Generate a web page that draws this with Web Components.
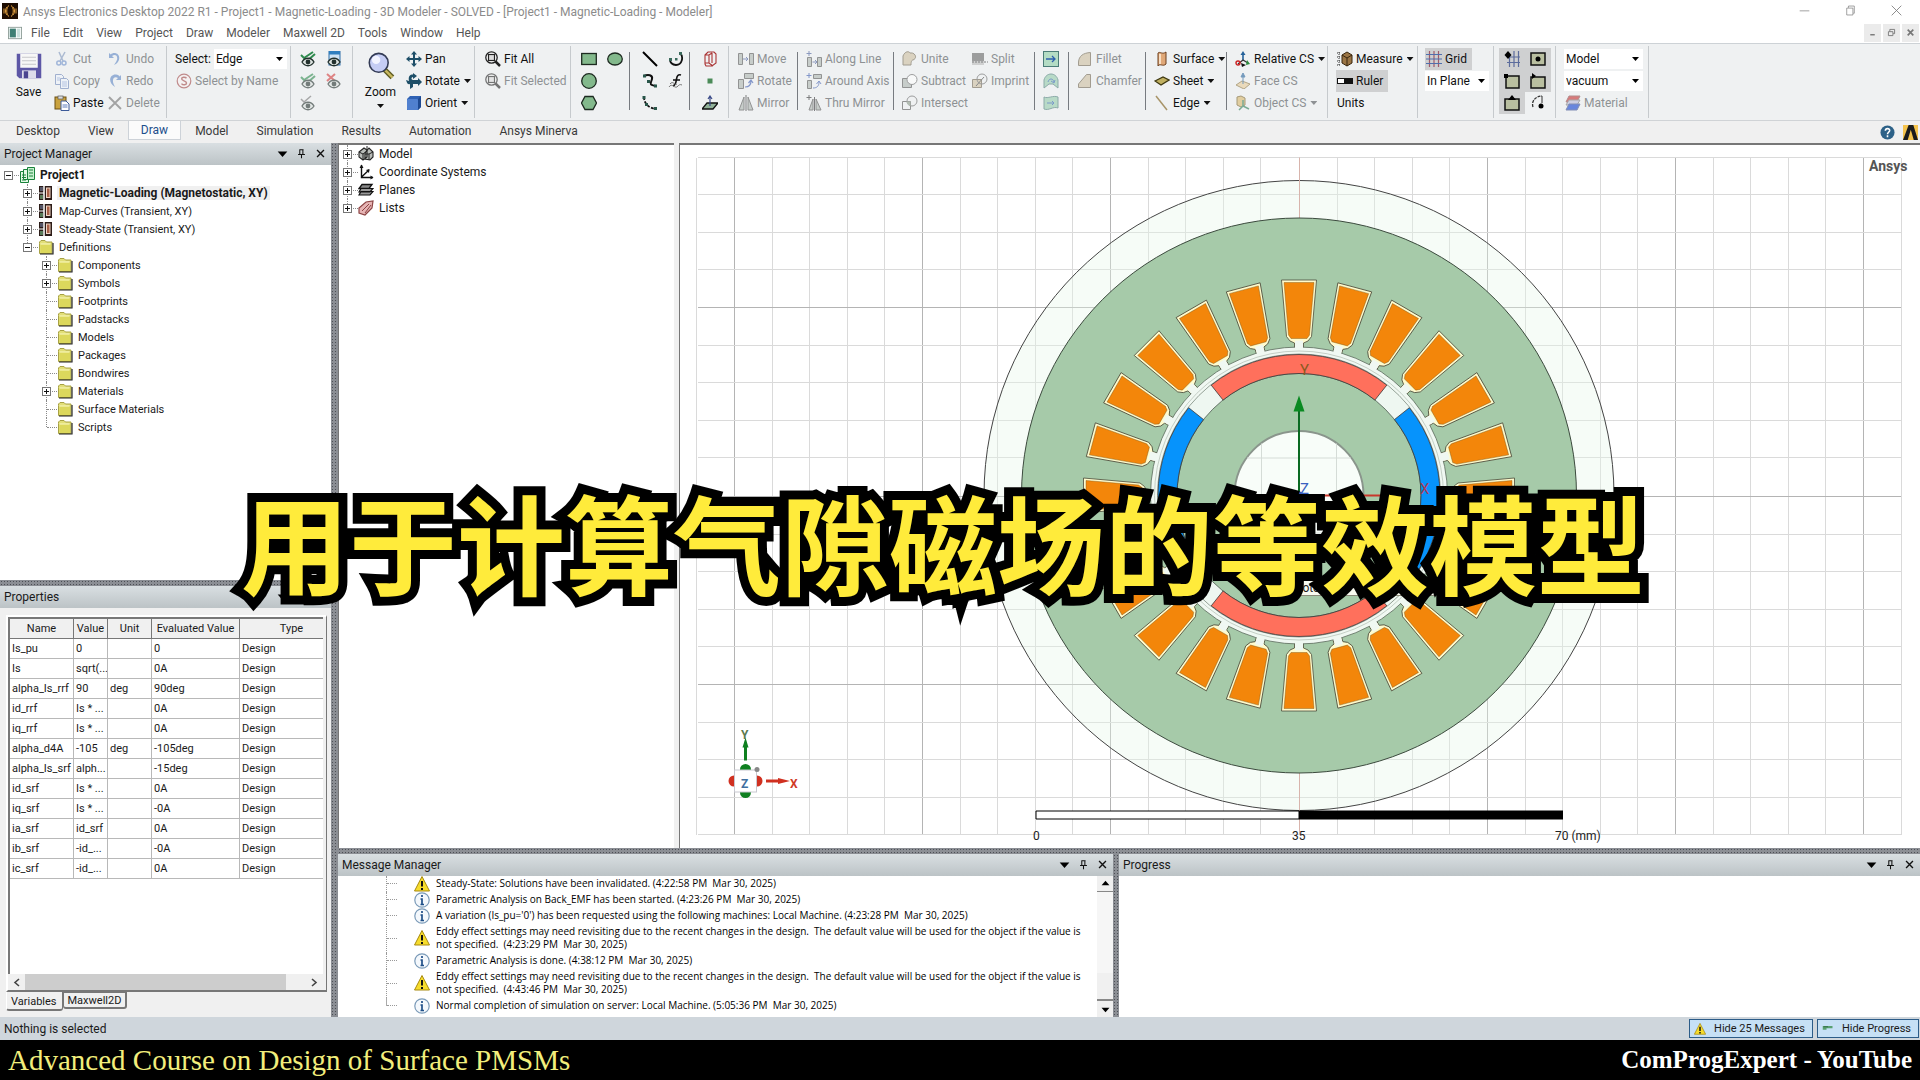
<!DOCTYPE html>
<html lang="en">
<head>
<meta charset="utf-8">
<title>Ansys Electronics Desktop 2022 R1</title>
<style>
	html, body {
		margin: 0;
		height: 100%;
		overflow: hidden;
		background: #f0f0f0;
		font-family: Roboto, "Open Sans", sans-serif;
		font-size: 12px;
		color: #1a1a1a;
	}
</style>
</head>
<body>
<desktop-app></desktop-app>

<script>
const EYE = '<path d="M2 11c3-5 9-5 12 0-3 5-9 5-12 0z" fill="#dfe5e2" stroke="#22302c" stroke-width="1.3"/><circle cx="8" cy="11" r="2.4" fill="#22302c"/>'
const SLAB = 'fill="#aeb6b0" stroke="#555" stroke-width="1"'
const TAN = 'fill="#cdbf9f" stroke="#6f6550" stroke-width="1"'

const ICONS = {
	app: '<rect width="16" height="16" fill="#1d0d02"/><g fill="none" stroke="#e0a040" stroke-width="1"><path d="M7 2.500C4 4 4 12 7 13.500M5 4c-2 2-2 6 0 8M9 2.500c3 1.500 3 9.500 0 11M11 4c2 2 2 6 0 8M2 5.500v5M14 5.500v5"/></g>',
	doc: '<rect x=".5" y="1.500" width="15" height="13" fill="#fff" stroke="#8a9a94"/><rect x="2" y="3" width="7" height="10" fill="#3f7f74"/><rect x="10" y="3" width="4" height="10" fill="#c9e0dc"/>',
	save: '<path d="M1 1h14v14H2.500L1 13.500z" fill="#5d57a6"/><rect x="3" y="1" width="10" height="8" fill="#f7f7f7"/><path d="M4 3h8M4 5h8M4 7h8" stroke="#c8c8cc" stroke-width=".6"/><rect x="4" y="10.500" width="8" height="4.500" fill="#dcdcea"/><rect x="5" y="11" width="2.500" height="4" fill="#4a4490"/>',
	cut: '<path d="M5 1l4 9M11 1L6 10" stroke="#7f96bd" stroke-width="1.500" fill="none"/><circle cx="4.800" cy="12" r="2" fill="none" stroke="#6d8fc9" stroke-width="1.500"/><circle cx="10" cy="12" r="2" fill="none" stroke="#6d8fc9" stroke-width="1.500"/>',
	copy: '<path d="M1.500 1.500h6l2 2v8h-8z" fill="#eef3fb" stroke="#6d86b8"/><path d="M6.500 5.500h6l2 2v8h-8z" fill="#eef3fb" stroke="#6d86b8"/><path d="M8 9h5M8 11h5M8 13h5M3 5h3M3 7h3" stroke="#8fa8d8"/>',
	paste: '<rect x="1" y="2" width="11" height="12" fill="#c9a23e" stroke="#6b4f12"/><rect x="4" y="1" width="5" height="3" fill="#ddd" stroke="#555" stroke-width=".7"/><path d="M7 6h5l3 3v6.500H7z" fill="#fff" stroke="#3c5a99"/><path d="M8.500 10h5M8.500 12h5" stroke="#5c7dbd"/>',
	undo: '<path d="M2 2v5h5L5 5c4-3 7 1 4 6l-2 3c7-3 7-12 0-12C6 2 4.500 2.500 3.800 3.500z" fill="#5d86c4"/>',
	redo: '<path d="M14 2v5H9l2-2C8 3 4 5 7 12l1 2C0 9 3 1 9 1.500c2 0 3 1 3.600 2z" fill="#5d86c4"/>',
	del: '<path d="M2 2l12 12M14 2L2 14" stroke="#6f6f6f" stroke-width="1.800"/>',
	byname: '<circle cx="8" cy="8" r="6.800" fill="#f8f2f2" stroke="#a24848" stroke-width="1.200"/><path d="M10.500 5.200C9 3.500 5.500 4 5.700 6c.3 2.200 4.800 1.500 4.800 4 0 2.200-3.500 2.500-5 .6" fill="none" stroke="#a24848" stroke-width="1.500"/>',
	eyecheck: '<path d="M1 4l3 3 9-6M4 8l3 2 8-7" stroke="#2f8b4e" stroke-width="2" fill="none"/>' + EYE,
	eyewin: '<rect x="3" y="0" width="11" height="14" fill="#cfe4f5" stroke="#2f6ea8"/><rect x="3" y="0" width="11" height="3.500" fill="#2f7fc0"/>' + EYE,
	eyex: '<path d="M1 1l8 7M9 1L1 8" stroke="#d43c3c" stroke-width="2"/>' + EYE,
	eyeplain: '<path d="M1 4l3 3 7-6" stroke="#777" stroke-width="1.500" fill="none"/>' + EYE,
	zoom: '<path d="M10 10l4.500 4.500" stroke="#5d5a20" stroke-width="3"/><path d="M10.500 10.500l4 4" stroke="#c8b860" stroke-width="1.400"/><circle cx="6.700" cy="6.200" r="5.400" fill="#c5cdf4" stroke="#333b55" stroke-width=".9"/><circle cx="5.200" cy="4.500" r="2.400" fill="#f2f4ff"/>',
	pan: '<path d="M8 0l3 3.500H9V7h3.500V5L16 8l-3.500 3V9H9v3.500h2L8 16l-3-3.500h2V9H3.500v2L0 8l3.500-3v2H7V3.500H5z" fill="#1e4f68"/>',
	rotate: '<path d="M7 0l4 3-4 3V4C5 4 5 7 7 7h5V5l4 4-4 4v-2H7v3l-3 2v-5C1 12 1 9 0 7l3 1C2 3 4 1.500 7 1.500z" fill="#1e4f68"/>',
	orient: '<path d="M1 4l3-3h11v11l-3 3H1z" fill="#2f62b4"/><rect x="1" y="4" width="11" height="11" rx="1" fill="#5080cf"/><path d="M12 4l3-3v11l-3 3z" fill="#1e4a92"/>',
	fitall: '<path d="M10 10l5 5" stroke="#222" stroke-width="2.500"/><circle cx="6.500" cy="6.500" r="5.700" fill="#fff" stroke="#222" stroke-width="1.300"/><rect x="3.500" y="3.500" width="6" height="6" fill="#ddd" stroke="#222" stroke-width="1.200"/>',
	rect: '<rect x=".7" y="2.500" width="14.600" height="11" fill="#83b98c" stroke="#1d2a20" stroke-width="1.300"/>',
	ellipse: '<ellipse cx="8" cy="8" rx="7.300" ry="6" fill="#83b98c" stroke="#1d2a20" stroke-width="1.300"/>',
	circle: '<circle cx="8" cy="8" r="7.300" fill="#83b98c" stroke="#1d2a20" stroke-width="1.300"/>',
	hexagon: '<path d="M4 1.500h8l3.500 6.500-3.500 6.500H4L.5 8z" fill="#83b98c" stroke="#1d2a20" stroke-width="1.300"/>',
	line: '<path d="M1 1l14 14" stroke="#000" stroke-width="2"/>',
	arc: '<path d="M12 2c4 4 2 12-4 12-4 0-6-3-6-5" fill="none" stroke="#111" stroke-width="1.800"/><path d="M11 1h3v3h-3zM1 7h3v3H1zM7 7h2.500v2.500H7z" fill="#3b6a5c"/>',
	spline: '<path d="M2 3c4-2 9-1 8 3S6 12 14 13" fill="none" stroke="#111" stroke-width="2"/><path d="M1 1.500h3v3H1zM12 11.500h3v3h-3zM5 7h3v3H5z" fill="#29564a"/>',
	func: '<path d="M13 2c-3-1-4 1-4.500 4S8 12 5 13M5 7h7" fill="none" stroke="#111" stroke-width="1.600"/><path d="M1 14c3-5 6 3 9-1 1-1 2-2 4-1M2 11c3-4 5 2 7 0" fill="none" stroke="#777"/>',
	arc3: '<path d="M2 2c0 6 4 11 12 12" fill="none" stroke="#111" stroke-width="1.800" stroke-dasharray="3 1.500"/><path d="M.5 1h3v3h-3zM3 8h3v3H3zM12 12h3v3h-3z" fill="#29564a"/>',
	box3d: '<path d="M3 4l3-3h6l2 2v9l-4 3H4l-1-2zM3 4h4l3-2M7 4v8M10 2v10M3 12l4 0 4 3" fill="none" stroke="#a33" stroke-width="1.100"/>',
	point: '<rect x="5.500" y="5.500" width="5" height="5" fill="#4b8b58"/>',
	plane: '<path d="M0 14l5-6h11l-5 6z" fill="#8fb097" stroke="#111" stroke-width="1.300"/><path d="M8 11V1M6 4l2-3 2 3" stroke="#3a4a88" stroke-width="1.200" fill="none"/>',
	move: `<path d="M.5 2.500h4v11h-4zM11.500 2.500h4v11h-4z" ${SLAB}/><path d="M5 8h5M8 6l2 2-2 2" stroke="#4a5f9c" fill="none"/>`,
	turn: `<path d="M.5 6.500h5v9h-5zM6.500.5h9v5h-9z" ${SLAB}/><path d="M7 14c4 0 6-2 6-6M10.500 10L13 7l2 3" stroke="#3d5cb0" stroke-width="1.200" fill="none"/>`,
	mirror: `<path d="M6 2v13H1zM10 2v13h5z" ${SLAB}/><path d="M8 0v16" stroke="#333"/>`,
	dupline: `<path d="M1.500 6.500h4v9h-4zM11.500 6.500h4v9h-4z" ${SLAB}/><path d="M6.500 11h4M9 9l2 2-2 2M3 0v5M.5 2.500h5" stroke="#4a5f9c" fill="none"/>`,
	dupaxis: `<path d="M1.500 7.500h4v8h-4zM7.500 1.500h8v4h-8z" ${SLAB}/><path d="M7 15c4 0 6-2 6-6M10.500 11L13 8l2 3M3 0v5M.5 2.500h5" stroke="#3d5cb0" fill="none"/>`,
	dupmirror: `<path d="M7 4v11H3zM10 4v11h5z" ${SLAB}/><path d="M8.500 2v14M3 0v5M.5 2.500h5" stroke="#333"/>`,
	unite: `<path d="M1 5c2-5 6-5 7-3 5-1 8 5 3 7-1 0-2 1-2 5H1z" ${TAN}/>`,
	subtract: `<path d="M.5 5.500h9v9h-9z" ${SLAB}/><circle cx="10" cy="6.500" r="5" fill="#fff" stroke="#666"/>`,
	intersect: `<circle cx="10" cy="6" r="5" fill="none" stroke="#666"/><path d="M.5 6.500h8v8h-8z" fill="none" stroke="#555"/><path d="M4 6.500h4.500V11C6 10.500 5 9 4.500 6.500z" fill="#8a9a88"/>`,
	split: '<path d="M0 2h12v8H0z" fill="#666"/><path d="M0 10h12v4H0z" fill="#bbb"/><path d="M0 11h16" stroke="#333" stroke-dasharray="2 1"/>',
	imprint: `<path d="M.5 6.500h9v8h-9z" ${TAN}/><circle cx="10" cy="6" r="5" fill="none" stroke="#666"/><path d="M4 13l8-9" stroke="#444"/>`,
	sheetarrow: '<rect x=".5" y=".5" width="15" height="15" fill="#b4dcc4" stroke="#4c7c78"/><path d="M3 8h9M9 5l3 3-3 3" stroke="#2e5fae" fill="none" stroke-width="1.300"/>',
	sheetbend: '<path d="M1 15V7c2-8 12-8 14 0v8l-5-4H6z" fill="#94ccac" stroke="#4c7c78"/><path d="M5 9c1-4 5-4 6 0M8 8l3 2 1-3" stroke="#2e5fae" fill="none"/>',
	sheetwrap: '<path d="M1 2c4 2 9-2 14 0v11c-5-2-9 3-14 1z" fill="#94ccac" stroke="#4c7c78"/><path d="M4 8h7M9 6l2 2-2 2" stroke="#2e5fae" fill="none"/>',
	fillet: `<path d="M1.500 14.500V11C2 5 6 2 13.500 1.500v13z" ${TAN}/>`,
	chamfer: `<path d="M1.500 14.500V11l8-9.500h4v13z" ${TAN}/>`,
	surface: '<path d="M4 2c2-2 4 2 8-1v12c-3 3-6-1-8 2z" fill="#e0a878" stroke="#6b3e1e"/><path d="M6 3v10" stroke="#fff0dc" stroke-width="1.500"/>',
	sheet: '<path d="M1 8l8-4 6 3-8 5z" fill="#c0b060" stroke="#3e3810" stroke-width="1.300"/>',
	edge: '<path d="M2 1l11 14" stroke="#a89468" stroke-width="1.500"/>',
	relcs: '<path d="M8 9V2" stroke="#24629a" stroke-width="1.600"/><path d="M5.500 4L8 0l2.500 4z" fill="#24629a"/><path d="M8 9l-5 4M8 9l5 3" stroke="#333" stroke-width="1.400"/><circle cx="3" cy="12" r="2" fill="none" stroke="#c22" stroke-width="1.400"/><path d="M12 9l3 4-4 1z" fill="#2c8a3c"/><path d="M6 12l5 2-4 2z" fill="#111"/>',
	facecs: '<path d="M1 12l6-4 8 3-6 5z" fill="#e8cc98" stroke="#8a7440"/><path d="M8 11V2M6 4l2-4 2 4z" stroke="#24629a" fill="#24629a"/>',
	objectcs: '<path d="M2 2l4-1 4 2v7l-4 2-4-2z" fill="#d8b86a" stroke="#77602a"/><path d="M8 5v6l6 3M8 11l-4 4" stroke="#2f7f58" stroke-width="1.500" fill="none"/>',
	measure: '<path d="M5 4l5-3 5 3v8l-5 3-5-3z" fill="#9a7444" stroke="#38260e"/><path d="M5 4l5 3 5-3M10 7v8" stroke="#38260e" fill="none"/><path d="M2 1v14M0 2h3M0 6h3M0 10h3M0 14h3" stroke="#333" stroke-dasharray="1 1"/>',
	ruler: '<rect x=".5" y="5.500" width="15" height="5" fill="#fff" stroke="#111"/><rect x="7" y="6" width="8" height="4" fill="#111"/>',
	grid: '<path d="M3.500 0v16M8 0v16M12.500 0v16" stroke="#a05a6a" stroke-width="1.200"/><path d="M0 3.500h16M0 8h16M0 12.500h16" stroke="#4f6fae" stroke-width="1.200"/>',
	snapgrid: '<path d="M5.500 4v12M10 0v16M14.500 0v16M3 6h13M3 11.500h13" stroke="#5c6c9c" stroke-width="1.200"/><path d="M4 0l3.500 4L4 8 .5 4z" fill="#000"/>',
	snapcenter: '<rect x="1" y="2" width="14" height="12" fill="#b9bfa0" stroke="#111" stroke-width="1.500"/><circle cx="8" cy="8" r="2.500" fill="#000"/>',
	snapvertex: '<rect x="2" y="3" width="13" height="12" fill="#b9bfa0" stroke="#111" stroke-width="1.500"/><rect x="0" y="1" width="4" height="4" fill="#000"/>',
	snapmid: '<rect x="1" y="4" width="14" height="11" fill="#b9bfa0" stroke="#111" stroke-width="1.500"/><path d="M2 0l4 3-4 3z" fill="#000"/>',
	snapface: '<rect x="1" y="4" width="14" height="11" fill="#b9bfa0" stroke="#111" stroke-width="1.500"/><path d="M8 0l4 5H4z" fill="#000"/>',
	snaparc: '<path d="M3 12C1 6 6 1 12 1" fill="none" stroke="#333" stroke-width="1.300" stroke-dasharray="3 1"/><path d="M12 1v7" stroke="#333"/><circle cx="11" cy="11" r="2.500" fill="#000"/>',
	material: '<path d="M4 1h11l-3 6H1z" fill="#c82c2c" stroke="#8a4a4a"/><path d="M4 5h11l-3 5H1z" fill="#b8b8d8" stroke="#777"/><path d="M4 9h11l-3 6H1z" fill="#1040d0" stroke="#3a4c8c"/>',
	help: '<circle cx="8" cy="8" r="7.500" fill="#2d6187"/><path d="M5.700 6.200C5.800 3 10.500 3.200 10.300 6 10 7.800 8 7.800 8 9.800M8 11v2" fill="none" stroke="#fff" stroke-width="1.700"/>',
	logo: '<rect width="16" height="16" fill="#f5c34c"/><path d="M6 0h5l5 16h-4.500L8.300 5 5 16H0z" fill="#1b1b1b"/>',
	project: '<path d="M1.500 4.500h8v11h-8z" fill="#e2f8e4" stroke="#18823a"/><path d="M4.500 2.500h7v10h-7z" fill="#e2f8e4" stroke="#18823a"/><path d="M8.500.5h7v12h-7z" fill="#c7f0cf" stroke="#18823a"/><path d="M3 8h4M3 10.500h4M3 13h4M10 3h4M10 6h4M10 9h4" stroke="#18823a"/>',
	design: '<rect x="1" y="1" width="13" height="14" fill="#2c1c18"/><path d="M6 0v16" stroke="#fff" stroke-width="1.500"/><rect x="8.500" y="3" width="3.500" height="9.500" fill="#a86048" stroke="#f1d8c8"/><rect x="2" y="2" width="3" height="4" fill="#556"/><rect x="2" y="10" width="3" height="4" fill="#587a58"/><path d="M1 8h5" stroke="#fff"/>',
	folder: '<path d="M1.500 4.500V3L3 1.500h4L8.500 3H14v11.500H1.500z" fill="#e2df78" stroke="#a8a244"/><path d="M2.500 5H13v9H2.500z" fill="#dcd85c"/><path d="M2 15h13V4" fill="none" stroke="#222" stroke-width="1.200"/><path d="M2.500 5h10" stroke="#fbf9c4"/>',
	model: '<path d="M1 6l5-4 3 2v7l-4 3-4-3zM7 7l4-5 4 4v5l-3 3-5-1z" fill="#b9bcb9" stroke="#222" stroke-width="1.100"/><path d="M1 6l4 2 4-3M5 8v6M7 8l4 0 4-2M11 8v6M9 5V0" stroke="#222" fill="none"/>',
	axes: '<path d="M3.500 1v12.500H15M3.500 13L11 6" fill="none" stroke="#111" stroke-width="1.400"/><path d="M1.500 4l2-3.500 2 3.500zM12.500 11.500l3 2-3 2zM8 6l3.500-1L11 9z" fill="#111"/>',
	planes: '<path d="M4 2.500h10l-3 4H1z" fill="#888" stroke="#111" stroke-width="1.300"/><path d="M3 6.500h12l-3 3.500H1zM3 9.500h12l-3 3.500H1z" fill="#999" stroke="#111" stroke-width="1.200"/>',
	lists: '<path d="M1 8l7-6 7-1-1 7-7 7-6-2z" fill="#e6b4b4" stroke="#8c4444" stroke-width="1.200"/><path d="M4 11l7-7M7 13l6-8" stroke="#8c4444"/>',
	warn: '<path d="M8 .5l7.500 14.500H.5z" fill="#f6dc2c" stroke="#a88a10"/><path d="M8 5v5.500M8 12v2" stroke="#111" stroke-width="2"/>',
	info: '<circle cx="8" cy="8" r="7.200" fill="#f4f8fc" stroke="#7a9ab8" stroke-width="1.200"/><path d="M8 3v2M6.500 7H8v5M6.500 12.500h3.500" stroke="#1f4f88" stroke-width="1.700" fill="none"/>',
	progress: '<path d="M1 4h13v3H6v2H1z" fill="#58a070"/><path d="M2 5h6" stroke="#2b5c3c"/>',
	pin: '<path d="M5 2.500h6M5.500 2v7M10 2v7M3 9.500h10M8 10v5" stroke="#111" stroke-width="1.500" fill="none"/>',
	close: '<path d="M3 3l10 10M13 3L3 13" stroke="#111" stroke-width="2"/>',
	down: '<path d="M1 5h14l-7 8z" fill="#000"/>',
	minimize: '<path d="M1 8.500h14" stroke="#777"/>',
	restore: '<path d="M2.500 4.500h9v10h-9zM5 4V1.500h8.500V12H12" stroke="#777" fill="none"/>',
	quit: '<path d="M1 1l14 14M15 1L1 15" stroke="#777" stroke-width="1.200"/>',
	mdimin: '<path d="M4 12h8" stroke="#777" stroke-width="2.500"/>',
	mdirestore: '<path d="M2.500 6.500h8v7h-8zM5 6V2.500h8.500V10H11" stroke="#777" stroke-width="1.600" fill="none"/>',
	mdiclose: '<path d="M3 3l10 10M13 3L3 13" stroke="#777" stroke-width="3"/>'
}

class BaseElement extends HTMLElement {
	connectedCallback(){
		if (!this.shadowRoot) {
			this.attachShadow({ mode: 'open' })
		}
		this.shadowRoot.innerHTML = this.render()
	}
	attr(name, fallback = ''){
		return this.getAttribute(name) || fallback
	}
}

class SvgIcon extends BaseElement {
	render(){
		return `
			<style>
				:host { display: inline-block; flex: none; width: var(--size, 16px); height: var(--size, 16px); }
				svg { display: block; width: 100%; height: 100%; }
			</style>
			<svg viewBox="0 0 16 16" aria-hidden="true">${ICONS[this.attr('name')] || ''}</svg>
		`
	}
}
customElements.define('svg-icon', SvgIcon)

class TitleBar extends BaseElement {
	render(){
		return `
			<style>
				:host { display: flex; align-items: center; height: 22px; background: #fff; color: #8b8b8b; padding: 0 1px 0 2px; }
				span { flex: 1; padding: 2px 0 0 5px; }
				button { border: 0; background: none; width: 46px; height: 20px; padding: 0; --size: 11px; }
			</style>
			<svg-icon name="app"></svg-icon>
			<span>Ansys Electronics Desktop 2022 R1 - Project1 - Magnetic-Loading - 3D Modeler - SOLVED - [Project1 - Magnetic-Loading - Modeler]</span>
			<button aria-label="Minimize"><svg-icon name="minimize"></svg-icon></button>
			<button aria-label="Restore"><svg-icon name="restore"></svg-icon></button>
			<button aria-label="Close"><svg-icon name="quit"></svg-icon></button>
		`
	}
}
customElements.define('title-bar', TitleBar)

class MenuBar extends BaseElement {
	render(){
		const items = ['File', 'Edit', 'View', 'Project', 'Draw', 'Modeler', 'Maxwell 2D', 'Tools', 'Window', 'Help']
		return `
			<style>
				:host { display: flex; align-items: center; height: 21px; background: #fff; padding: 0 1px 0 8px; --size: 14px; }
				nav { display: flex; flex: 1; gap: 13px; padding-left: 9px; }
				nav button { border: 0; background: none; padding: 0; font: inherit; color: #555; }
				.mdi { display: flex; gap: 2px; --size: 9px; }
				.mdi button { width: 17px; height: 18px; padding: 0; border: 0; background: #ebebeb; }
			</style>
			<svg-icon name="doc"></svg-icon>
			<nav>${items.map(i => `<button>${i}</button>`).join('')}</nav>
			<div class="mdi">
				<button aria-label="Minimize window"><svg-icon name="mdimin"></svg-icon></button>
				<button aria-label="Restore window"><svg-icon name="mdirestore"></svg-icon></button>
				<button aria-label="Close window"><svg-icon name="mdiclose"></svg-icon></button>
			</div>
		`
	}
}
customElements.define('menu-bar', MenuBar)

class RibbonGroup extends BaseElement {
	render(){
		return `
			<style>
				:host {
					display: grid;
					box-sizing: border-box;
					grid-template-rows: repeat(3, 22px);
					grid-template-columns: ${this.attr('cols')};
					grid-auto-flow: column;
					align-items: center;
					padding: 4px 0 8px ${this.attr('pad', '0')}px;
					background: linear-gradient(90deg, #c6cacd, #c6cacd) right 2px / 1px 72px no-repeat;
				}
			</style>
			<slot></slot>
		`
	}
}
customElements.define('ribbon-group', RibbonGroup)

class RibbonSep extends BaseElement {
	render(){
		return `<style>:host { display: block; grid-row: span 3; height: 58px; border-left: 1px solid #777b80; }</style>`
	}
}
customElements.define('ribbon-sep', RibbonSep)

class RibbonButton extends BaseElement {
	render(){
		const disabled = this.hasAttribute('disabled')
		const icon = this.attr('icon')
		return `
			<style>
				:host { display: block; }
				:host([large]) { grid-row: span 3; align-self: start; }
				button {
					display: flex;
					align-items: center;
					gap: 3px;
					height: 22px;
					padding: 0 5px 0 1px;
					border: 0;
					background: none;
					font: inherit;
					color: #111;
					white-space: nowrap;
				}
				:host([iconly]) button { padding: 0 5px; }
				:host([pressed]) button { background: #cfd0d1; }
				:host([disabled]) button { color: #8e9194; }
				:host([disabled]) svg-icon { opacity: .6; }
				:host([large]) button { flex-direction: column; width: 100%; height: 66px; padding: 4px 0 0; gap: 5px; --size: 28px; }
				.caret { width: 7px; height: 4px; margin-left: 1px; background: currentColor; clip-path: polygon(0 0, 100% 0, 50% 100%); }
				:host([large]) .caret { margin: 0; }
			</style>
			<button ${disabled ? 'disabled' : ''} ${this.hasAttribute('iconly') ? `aria-label="${icon}"` : ''}>
				${icon ? `<svg-icon name="${icon}"></svg-icon>` : ''}
				<slot></slot>
				${this.hasAttribute('caret') ? '<i class="caret"></i>' : ''}
			</button>
		`
	}
}
customElements.define('ribbon-button', RibbonButton)

class ComboBox extends BaseElement {
	render(){
		return `
			<style>
				:host { display: flex; align-items: center; gap: 3px; color: #111; }
				.box { position: relative; flex: 1; }
				select { appearance: none; display: block; width: 100%; height: 20px; border: 0; border-radius: 0; padding: 0 2px; background: #fff; font: inherit; color: inherit; }
				i { position: absolute; right: 4px; top: 8px; width: 7px; height: 4px; background: #000; clip-path: polygon(0 0, 100% 0, 50% 100%); pointer-events: none; }
			</style>
			${this.attr('label') ? `<label for="s">${this.attr('label')}</label>` : ''}
			<div class="box"><select id="s" aria-label="${this.attr('name', this.attr('label'))}"><option>${this.attr('value')}</option></select><i></i></div>
		`
	}
}
customElements.define('combo-box', ComboBox)

class RibbonBar extends BaseElement {
	render(){
		return `
			<style>
				:host { display: flex; box-sizing: border-box; height: 78px; background: #eff1f2; border-top: 1px solid #cdd2d6; border-bottom: 1px solid #d0d3d6; }
				combo-box.select { width: 112px; }
			</style>
			<ribbon-group cols="49px 53px 61px" pad="4">
				<ribbon-button large icon="save">Save</ribbon-button>
				<ribbon-button disabled icon="cut">Cut</ribbon-button>
				<ribbon-button disabled icon="copy">Copy</ribbon-button>
				<ribbon-button icon="paste">Paste</ribbon-button>
				<ribbon-button disabled icon="undo">Undo</ribbon-button>
				<ribbon-button disabled icon="redo">Redo</ribbon-button>
				<ribbon-button disabled icon="del">Delete</ribbon-button>
			</ribbon-group>
			<ribbon-group cols="116px" pad="8">
				<combo-box class="select" label="Select:" value="Edge"></combo-box>
				<ribbon-button disabled icon="byname">Select by Name</ribbon-button>
			</ribbon-group>
			<ribbon-group cols="26px 32px" pad="4">
				<ribbon-button iconly icon="eyecheck"></ribbon-button>
				<ribbon-button iconly disabled icon="eyecheck"></ribbon-button>
				<ribbon-button iconly disabled icon="eyeplain"></ribbon-button>
				<ribbon-button iconly icon="eyewin"></ribbon-button>
				<ribbon-button iconly disabled icon="eyex"></ribbon-button>
			</ribbon-group>
			<ribbon-group cols="49px 70px" pad="3">
				<ribbon-button large caret icon="zoom">Zoom</ribbon-button>
				<ribbon-button icon="pan">Pan</ribbon-button>
				<ribbon-button caret icon="rotate">Rotate</ribbon-button>
				<ribbon-button caret icon="orient">Orient</ribbon-button>
			</ribbon-group>
			<ribbon-group cols="87px" pad="9">
				<ribbon-button icon="fitall">Fit All</ribbon-button>
				<ribbon-button disabled icon="fitall">Fit Selected</ribbon-button>
			</ribbon-group>
			<ribbon-group cols="26px 27px 8px 26px 26px 8px 32px" pad="5">
				<ribbon-button iconly icon="rect"></ribbon-button>
				<ribbon-button iconly icon="circle"></ribbon-button>
				<ribbon-button iconly icon="hexagon"></ribbon-button>
				<ribbon-button iconly icon="ellipse"></ribbon-button>
				<ribbon-sep></ribbon-sep>
				<ribbon-button iconly icon="line"></ribbon-button>
				<ribbon-button iconly icon="spline"></ribbon-button>
				<ribbon-button iconly icon="arc3"></ribbon-button>
				<ribbon-button iconly icon="arc"></ribbon-button>
				<ribbon-button iconly icon="func"></ribbon-button>
				<span></span>
				<ribbon-sep></ribbon-sep>
				<ribbon-button iconly icon="box3d"></ribbon-button>
				<ribbon-button iconly icon="point"></ribbon-button>
				<ribbon-button iconly icon="plane"></ribbon-button>
			</ribbon-group>
			<ribbon-group cols="60px 8px 88px 8px 70px 63px 4px 30px 8px 69px 8px 73px 8px 94px" pad="8">
				<ribbon-button disabled icon="move">Move</ribbon-button>
				<ribbon-button disabled icon="turn">Rotate</ribbon-button>
				<ribbon-button disabled icon="mirror">Mirror</ribbon-button>
				<ribbon-sep></ribbon-sep>
				<ribbon-button disabled icon="dupline">Along Line</ribbon-button>
				<ribbon-button disabled icon="dupaxis">Around Axis</ribbon-button>
				<ribbon-button disabled icon="dupmirror">Thru Mirror</ribbon-button>
				<ribbon-sep></ribbon-sep>
				<ribbon-button disabled icon="unite">Unite</ribbon-button>
				<ribbon-button disabled icon="subtract">Subtract</ribbon-button>
				<ribbon-button disabled icon="intersect">Intersect</ribbon-button>
				<ribbon-button disabled icon="split">Split</ribbon-button>
				<ribbon-button disabled icon="imprint">Imprint</ribbon-button>
				<span></span>
				<ribbon-sep></ribbon-sep>
				<ribbon-button iconly icon="sheetarrow"></ribbon-button>
				<ribbon-button iconly disabled icon="sheetbend"></ribbon-button>
				<ribbon-button iconly disabled icon="sheetwrap"></ribbon-button>
				<ribbon-sep></ribbon-sep>
				<ribbon-button disabled icon="fillet">Fillet</ribbon-button>
				<ribbon-button disabled icon="chamfer">Chamfer</ribbon-button>
				<span></span>
				<ribbon-sep></ribbon-sep>
				<ribbon-button caret icon="surface">Surface</ribbon-button>
				<ribbon-button caret icon="sheet">Sheet</ribbon-button>
				<ribbon-button caret icon="edge">Edge</ribbon-button>
				<ribbon-sep></ribbon-sep>
				<ribbon-button caret icon="relcs">Relative CS</ribbon-button>
				<ribbon-button disabled icon="facecs">Face CS</ribbon-button>
				<ribbon-button disabled caret icon="objectcs">Object CS</ribbon-button>
			</ribbon-group>
			<ribbon-group cols="82px" pad="8">
				<ribbon-button caret icon="measure">Measure</ribbon-button>
				<ribbon-button pressed icon="ruler">Ruler</ribbon-button>
				<ribbon-button>Units</ribbon-button>
			</ribbon-group>
			<ribbon-group cols="64px 5px" pad="7">
				<ribbon-button pressed icon="grid">Grid</ribbon-button>
				<combo-box name="Grid plane" value="In Plane"></combo-box>
			</ribbon-group>
			<ribbon-group cols="26px 31px" pad="5">
				<ribbon-button iconly pressed icon="snapgrid"></ribbon-button>
				<ribbon-button iconly pressed icon="snapvertex"></ribbon-button>
				<ribbon-button iconly pressed icon="snapface"></ribbon-button>
				<ribbon-button iconly pressed icon="snapcenter"></ribbon-button>
				<ribbon-button iconly pressed icon="snapmid"></ribbon-button>
				<ribbon-button iconly icon="snaparc"></ribbon-button>
			</ribbon-group>
			<ribbon-group cols="79px 6px" pad="8">
				<combo-box name="Drawing model" value="Model"></combo-box>
				<combo-box name="Default material" value="vacuum"></combo-box>
				<ribbon-button disabled icon="material">Material</ribbon-button>
			</ribbon-group>
		`
	}
}
customElements.define('ribbon-bar', RibbonBar)

class TabStrip extends BaseElement {
	render(){
		const tabs = ['Desktop', 'View', 'Draw', 'Model', 'Simulation', 'Results', 'Automation', 'Ansys Minerva']
		return `
			<style>
				:host { display: flex; height: 22px; background: #f0f0f0; padding: 0 2px; }
				nav { flex: 1; display: flex; align-items: flex-start; }
				button { border: 0; background: none; height: 19px; padding: 0 14px; font: inherit; color: #3a3a3a; }
				button.active { background: #fbfbfb; border: 1px solid #cdd2d8; border-top: 0; padding: 0 12px; color: #1d4f8c; }
				.right { display: flex; align-items: center; gap: 8px; --size: 15px; }
			</style>
			<nav>${tabs.map(t => `<button class="${t === 'Draw' ? 'active' : ''}">${t}</button>`).join('')}</nav>
			<div class="right"><svg-icon name="help"></svg-icon><svg-icon name="logo"></svg-icon></div>
		`
	}
}
customElements.define('tab-strip', TabStrip)

class DockPanel extends BaseElement {
	render(){
		return `
			<style>
				:host { display: flex; flex-direction: column; min-width: 0; min-height: 0; background: #fff; overflow: hidden; }
				header { display: flex; align-items: center; flex: none; height: 22px; padding: 0 1px 0 4px; background: linear-gradient(#d9dfe2, #bcc3c6); }
				h2 { flex: 1; margin: 0; font-size: 12px; font-weight: 400; }
				button { width: 19px; height: 18px; padding: 0; border: 0; background: none; --size: 11px; }
				section { flex: 1; min-height: 0; display: flex; flex-direction: column; }
			</style>
			<header>
				<h2>${this.attr('heading')}</h2>
				<button aria-label="Menu"><svg-icon name="down"></svg-icon></button>
				<button aria-label="Pin"><svg-icon name="pin"></svg-icon></button>
				<button aria-label="Close"><svg-icon name="close"></svg-icon></button>
			</header>
			<section><slot></slot></section>
		`
	}
}
customElements.define('dock-panel', DockPanel)

class TreeRow extends BaseElement {
	render(){
		const state = this.attr('state')
		return `
			<style>
				:host { display: flex; align-items: center; height: 18px; padding-left: calc(var(--depth, 0) * 19px); white-space: nowrap; }
				.cell { position: relative; flex: none; width: 19px; height: 18px; }
				.cell::before { content: ""; position: absolute; left: 8px; top: 0; bottom: ${this.hasAttribute('last') ? '9px' : '0'}; border-left: 1px dotted #8a8a8a; }
				.cell::after { content: ""; position: absolute; left: 9px; right: 0; top: 9px; border-top: 1px dotted #8a8a8a; }
				:host([root]) .cell::before { display: none; }
				.box { position: absolute; z-index: 1; left: 4px; top: 5px; width: 7px; height: 7px; border: 1px solid #777; background: linear-gradient(#111, #111) center / 5px 1px no-repeat #fff; }
				.plus { background: linear-gradient(#111, #111) center / 5px 1px no-repeat, linear-gradient(#111, #111) center / 1px 5px no-repeat, #fff; }
				span { padding: 0 2px; margin-left: 3px; }
				:host([bold]) span { font-size: 12px; font-weight: 700; }
				:host([active]) span { background: #f0f0f0; }
			</style>
			<div class="cell">${state ? `<i class="box ${state}"></i>` : ''}</div>
			<svg-icon name="${this.attr('icon')}"></svg-icon>
			<span><slot></slot></span>
		`
	}
}
customElements.define('tree-row', TreeRow)

class ProjectTree extends BaseElement {
	render(){
		const rows = [
			[1, 'plus', 'design', 'Magnetic-Loading (Magnetostatic, XY)', 'bold active'],
			[1, 'plus', 'design', 'Map-Curves (Transient, XY)', ''],
			[1, 'plus', 'design', 'Steady-State (Transient, XY)', ''],
			[1, 'minus', 'folder', 'Definitions', 'last'],
			[2, 'plus', 'folder', 'Components', ''],
			[2, 'plus', 'folder', 'Symbols', ''],
			[2, '', 'folder', 'Footprints', ''],
			[2, '', 'folder', 'Padstacks', ''],
			[2, '', 'folder', 'Models', ''],
			[2, '', 'folder', 'Packages', ''],
			[2, '', 'folder', 'Bondwires', ''],
			[2, 'plus', 'folder', 'Materials', ''],
			[2, '', 'folder', 'Surface Materials', ''],
			[2, '', 'folder', 'Scripts', 'last']
		]
		return `
			<style>:host { display: block; padding-top: 1px; font-size: 11px; }</style>
			<tree-row root bold state="minus" icon="project">Project1</tree-row>
			${rows.map(([d, s, i, t, x]) => `<tree-row style="--depth:${d}" state="${s}" icon="${i}" ${x}>${t}</tree-row>`).join('')}
		`
	}
}
customElements.define('project-tree', ProjectTree)

class PropertyGrid extends BaseElement {
	render(){
		const rows = [
			['Is_pu', '0', '', '0'], ['Is', 'sqrt(...', '', '0A'], ['alpha_Is_rrf', '90', 'deg', '90deg'],
			['id_rrf', 'Is * ...', '', '0A'], ['iq_rrf', 'Is * ...', '', '0A'], ['alpha_d4A', '-105', 'deg', '-105deg'],
			['alpha_Is_srf', 'alph...', '', '-15deg'], ['id_srf', 'Is * ...', '', '0A'], ['iq_srf', 'Is * ...', '', '-0A'],
			['ia_srf', 'id_srf', '', '0A'], ['ib_srf', '-id_...', '', '-0A'], ['ic_srf', '-id_...', '', '0A']
		]
		return `
			<style>
				:host { flex: 1; display: flex; flex-direction: column; min-height: 0; padding: 7px 4px 5px 6px; background: #f0f0f0; font-size: 11px; }
				.frame { flex: 1; display: flex; flex-direction: column; min-height: 0; border: 2px solid #fff; border-right: 1px solid #777; border-bottom: 2px solid #777; padding-right: 3px; background: #f0f0f0; }
				.scroll { flex: 1; overflow: hidden; background: #fff; border: 1px solid #777; border-width: 2px 0 0 2px; }
				table { border-collapse: separate; border-spacing: 0; table-layout: fixed; width: 334px; }
				th, td { box-sizing: border-box; height: 20px; padding: 0 2px; border-right: 1px solid #b8b8b8; border-bottom: 1px solid #b8b8b8; text-align: left; font-weight: 400; white-space: nowrap; overflow: hidden; }
				th { background: #f0f0f0; border-color: #777; text-align: center; }
				.hbar { display: flex; align-items: center; height: 16px; background: #f0f0f0; }
				.hbar button { width: 17px; height: 16px; border: 0; background: none; padding: 0; }
				.hbar svg { display: block; margin: auto; width: 7px; height: 9px; }
				.thumb { flex: 1; height: 16px; margin-right: 20px; background: #cdcdcd; }
				.tabs { display: flex; align-items: flex-start; flex: none; height: 20px; }
				.tabs button { height: 17px; padding: 0 4px; border: 1px solid #777; border-width: 1px 2px 2px 1px; border-radius: 0 0 3px 3px; background: #f0f0f0; font: inherit; color: inherit; }
				.tabs button.on { height: 19px; border-width: 0 1px 2px 1px; border-left-color: #fff; padding: 2px 5px 0 4px; }
			</style>
			<div class="frame">
				<div class="scroll">
					<table>
						<colgroup><col style="width:64px"><col style="width:34px"><col style="width:44px"><col style="width:88px"><col style="width:104px"></colgroup>
						<thead><tr><th>Name</th><th>Value</th><th>Unit</th><th>Evaluated Value</th><th>Type</th></tr></thead>
						<tbody>${rows.map(r => `<tr>${r.map(c => `<td>${c}</td>`).join('')}<td>Design</td></tr>`).join('')}</tbody>
					</table>
				</div>
				<div class="hbar">
					<button aria-label="Scroll left"><svg viewBox="0 0 7 9"><path d="M6 1L2 4.500 6 8" fill="none" stroke="#444" stroke-width="1.600"/></svg></button>
					<div class="thumb"></div>
					<button aria-label="Scroll right"><svg viewBox="0 0 7 9"><path d="M1 1l4 3.500L1 8" fill="none" stroke="#444" stroke-width="1.600"/></svg></button>
				</div>
			</div>
			<div class="tabs"><button class="on">Variables</button><button>Maxwell2D</button></div>
		`
	}
}
customElements.define('property-grid', PropertyGrid)

class ModelTree extends BaseElement {
	render(){
		return `
			<style>:host { display: block; background: #fff; border-top: 2px solid #777; border-left: 1px solid #777; }</style>
			<tree-row state="plus" icon="model">Model</tree-row>
			<tree-row state="plus" icon="axes">Coordinate Systems</tree-row>
			<tree-row state="plus" icon="planes">Planes</tree-row>
			<tree-row state="plus" icon="lists" last>Lists</tree-row>
		`
	}
}
customElements.define('model-tree', ModelTree)

// Cross-section of the machine, drawn around the shaft centre
class ModelView extends BaseElement {
	polar(r, deg){
		const a = deg * Math.PI / 180
		return `${(r * Math.sin(a)).toFixed(2)} ${(-r * Math.cos(a)).toFixed(2)}`
	}
	grid(){
		const step = 37.6
		let out = ''
		for (let i = -16; i <= 16; i++) {
			const x = Math.round(i * step)
			out += `<path d="M${x}.5 -338V339" stroke="${i % 5 ? '#dadada' : '#b4b4b4'}"/>`
		}
		for (let i = -9; i <= 9; i++) {
			const y = Math.round(i * step)
			out += `<path d="M-601 ${y}.5H602" stroke="${i % 5 ? '#dadada' : '#b4b4b4'}"/>`
		}
		return out
	}
	magnet(centre, color){
		const a = centre - 38.5
		const b = centre + 38.5
		return `<path d="M${this.polar(141, a)}A141 141 0 0 1 ${this.polar(141, b)}L${this.polar(122, b)}A122 122 0 0 0 ${this.polar(122, a)}z" fill="${color}" stroke="#3a3a3a" stroke-width=".8"/>`
	}
	slots(){
		let out = ''
		for (let i = 0; i < 24; i++) {
			out += `<g transform="rotate(${i * 15})">
				<path d="M-4.500 -146V-152.500L-9 -154.500L-12.500 -159L-17.500 -215.500H17.500L12.500 -159L9 -154.500L4.500 -152.500V-146z" fill="#fffbcc" stroke="#4a4a3a" stroke-width=".8"/>
				<path d="M-8 -157L-10.500 -160.500L-15 -213H15L10.500 -160.500L8 -157z" fill="#f3860a" stroke="#7a5010" stroke-width=".4"/>
			</g>`
		}
		return out
	}
	render(){
		return `
			<style>
				:host { display: block; min-width: 0; min-height: 0; background: #fff; border-top: 2px solid #777; border-left: 1px solid #777; overflow: hidden; }
				svg { display: block; width: 100%; height: 100%; }
				text { font-family: Roboto, sans-serif; font-size: 12px; fill: #222; }
				.axis { font-size: 15px; }
			</style>
			<svg viewBox="-619 -350 1240 702" role="img" aria-label="Machine cross-section">
				<g fill="none" shape-rendering="crispEdges">${this.grid()}</g>
				<circle r="315" fill="#e6f7e8" fill-opacity=".36" stroke="#444" stroke-width="1"/>
				<path d="M.5 -338V339" stroke="#d8b4ac"/>
				<circle r="277.500" fill="#a6caa9" stroke="#3c4a3e"/>
				${this.slots()}
				<circle r="148.500" fill="#f0f8f2" stroke="#5a6a5c" stroke-width=".8"/>
				<g fill="#f0f8f2">${Array.from({ length: 24 }, (_, i) => `<path transform="rotate(${i * 15})" d="M-4 -155V-146H4V-155z"/>`).join('')}</g>
				<circle r="144.500" fill="none" stroke="#b9c4ba" stroke-width=".8"/>
				<circle r="141.500" fill="#eef7f1" stroke="#7d8c80" stroke-width=".8"/>
				<circle r="122" fill="#a6caa9" stroke="#4a584c" stroke-width=".8"/>
				${this.magnet(0, '#ff705c')}${this.magnet(180, '#ff705c')}${this.magnet(90, '#0693fc')}${this.magnet(270, '#0693fc')}
				<circle r="64.500" fill="#f8fdf9" stroke="#8a958c" stroke-width="2"/>
				<path d="M-37.500 -52V52M37.500 -52V52M-52 -37.500H52M-52 37.500H52" stroke="#d5dcd7"/>
				<path d="M0 0V-86" stroke="#0a6a22" stroke-width="2"/><path d="M-5.500 -84L0 -100L5.500 -84z" fill="#0a8a22"/>
				<path d="M0 0H88" stroke="#c8382c" stroke-width="2"/><path d="M86 -4L100 0L86 4z" fill="#f08a68"/>
				<circle r="4" fill="#3858b8"/>
				<text class="axis" x="1" y="-121" style="fill:#8a5a20">Y</text>
				<text class="axis" x="121" y="-2" style="fill:#a83a5a">X</text>
				<text class="axis" x="1" y="-2" style="fill:#3a60c0">Z</text>
				<rect x="-6" y="83" width="142" height="17" fill="#f8faf0" stroke="#8a8a7a"/>
				<text x="-4" y="96">Rotor,</text>
				<path d="M-263 315.500H0V323.500H-263z" fill="#fff" stroke="#000"/>
				<rect y="315" width="264" height="9" fill="#000"/>
				<text x="-266" y="344">0</text>
				<text x="-7" y="344">35</text>
				<text x="256" y="344">70 (mm)</text>
				<text x="570" y="-325" style="font-size:14px;font-weight:700;fill:#555">Ansys</text>
				<circle cx="-553.500" cy="274" r="5.500" fill="#0f8020"/><circle cx="-553.500" cy="297" r="5.500" fill="#0f8020"/>
				<circle cx="-565" cy="285.500" r="5.500" fill="#d03020"/><circle cx="-542" cy="285.500" r="5.500" fill="#d03020"/>
				<rect x="-564.500" y="274.500" width="22" height="22" fill="#fff" stroke="#c8c8d0"/>
				<circle cx="-542" cy="274" r="2.500" fill="#888"/>
				<path d="M-553.500 265V250" stroke="#0f8020" stroke-width="3"/><path d="M-556.500 252L-553.500 242L-550.500 252z" fill="#0f8020"/>
				<path d="M-533 285.500H-518" stroke="#d03020" stroke-width="3"/><path d="M-521 282.500L-509 285.500L-521 288.500z" fill="#d03020"/>
				<text x="-558" y="243" style="font-weight:700;fill:#5a7a50">Y</text>
				<text x="-509" y="292" style="font-weight:700;fill:#d03a28">X</text>
				<text x="-558" y="292" style="font-weight:700;fill:#3f6fa0">Z</text>
			</svg>
		`
	}
}
customElements.define('model-view', ModelView)

class MessageList extends BaseElement {
	render(){
		const eddy = 'Eddy effect settings may need revisiting due to the recent changes in the design.&nbsp; The default value will be used for the object if the value is not specified.&nbsp; '
		const rows = [
			['warn', 'Steady-State: Solutions have been invalidated. (4:22:58 PM&nbsp; Mar 30, 2025)'],
			['info', 'Parametric Analysis on Back_EMF has been started. (4:23:26 PM&nbsp; Mar 30, 2025)'],
			['info', "A variation (Is_pu='0') has been requested using the following machines: Local Machine. (4:23:28 PM&nbsp; Mar 30, 2025)"],
			['warn', eddy + '(4:23:29 PM&nbsp; Mar 30, 2025)'],
			['info', 'Parametric Analysis is done. (4:38:12 PM&nbsp; Mar 30, 2025)'],
			['warn', eddy + '(4:43:46 PM&nbsp; Mar 30, 2025)'],
			['info', 'Normal completion of simulation on server: Local Machine. (5:05:36 PM&nbsp; Mar 30, 2025)']
		]
		return `
			<style>
				:host { flex: 1; display: flex; min-height: 0; font-family: "Open Sans", "Noto Sans", sans-serif; font-size: 10px; line-height: 13px; color: #000; }
				ul { flex: 1; min-width: 0; margin: 0; padding: 0 0 0 48px; list-style: none; }
				li { display: flex; align-items: center; padding: 1px 0 2px; border-left: 1px dotted #999; }
				li:last-child { border-image: linear-gradient(#aaa 50%, transparent 50%) 1; }
				li i { flex: none; width: 10px; border-top: 1px dotted #999; margin-right: 17px; }
				li svg-icon { margin: -2px 6px -2px 0; }
				.vbar { display: flex; flex-direction: column; width: 16px; background: #f6f6f6; }
				.vbar button { height: 16px; padding: 0; border: 0; border-bottom: 1px solid #888; background: #f0f0f0; --size: 9px; }
				.vbar button:first-child svg-icon { transform: rotate(180deg); }
				.track { flex: 1; }
				.thumb { height: 26px; background: #f0f0f0; border-bottom: 2px solid #888; }
				.vbar button:last-child { border: 0; }
			</style>
			<ul>${rows.map(([icon, text]) => `<li><i></i><svg-icon name="${icon}"></svg-icon><span>${text}</span></li>`).join('')}</ul>
			<div class="vbar">
				<button aria-label="Scroll up"><svg-icon name="down"></svg-icon></button>
				<div class="track"></div><div class="thumb"></div>
				<button aria-label="Scroll down"><svg-icon name="down"></svg-icon></button>
			</div>
		`
	}
}
customElements.define('message-list', MessageList)

class StatusBar extends BaseElement {
	render(){
		return `
			<style>
				:host { display: flex; align-items: center; gap: 4px; height: 23px; padding: 0 1px 0 4px; background: #cfd6dc; }
				span { flex: 1; }
				button { display: flex; align-items: center; gap: 8px; height: 19px; padding: 0 7px 0 4px; border: 1px solid #2c5c88; background: #c6e0f5; font: inherit; font-size: 11px; color: #1a1a1a; --size: 12px; }
			</style>
			<span>Nothing is selected</span>
			<button><svg-icon name="warn"></svg-icon>Hide 25 Messages</button>
			<button><svg-icon name="progress"></svg-icon>Hide Progress</button>
		`
	}
}
customElements.define('status-bar', StatusBar)

class CaptionBar extends BaseElement {
	render(){
		return `
			<style>
				:host { display: flex; align-items: center; justify-content: space-between; height: 40px; padding: 0 8px; background: #000; color: #fff; font-family: "Liberation Serif", "Times New Roman", serif; line-height: 36px; }
				.course { color: #f2ee7c; font-size: 29px; }
				.channel { font-size: 25px; font-weight: 700; }
			</style>
			<span class="course"><slot name="course"></slot></span>
			<span class="channel"><slot name="channel"></slot></span>
		`
	}
}
customElements.define('caption-bar', CaptionBar)

class VideoTitle extends BaseElement {
	render(){
		return `
			<style>
				:host {
					position: absolute;
					left: 0;
					right: 0;
					top: 45%;
					padding-right: 34px;
					text-align: center;
					white-space: nowrap;
					font-family: "Noto Sans CJK SC", sans-serif;
					font-size: 108px;
					line-height: 108px;
					font-weight: 700;
					color: #ffeb3b;
					-webkit-text-stroke: 18px #000;
					paint-order: stroke fill;
					pointer-events: none;
				}
			</style>
			<slot></slot>
		`
	}
}
customElements.define('video-title', VideoTitle)

class DesktopApp extends BaseElement {
	render(){
		return `
			<style>
				:host { position: relative; display: flex; flex-direction: column; height: 100vh; }
				main { flex: 1; min-height: 0; display: grid; grid-template-columns: 331px 7px 1fr; }
				.left { display: grid; grid-template-rows: 1fr 6px 431px; min-height: 0; }
				.right { display: grid; grid-template-rows: 1fr 6px 163px; min-height: 0; min-width: 0; }
				.editor { display: grid; grid-template-columns: 336px 5px 1fr; min-height: 0; background: #f0f0f0; }
				.output { display: grid; grid-template-columns: 775fr 6px 801fr; min-height: 0; }
				.bar { background-color: #8b8e94; background-image: radial-gradient(#4c4f55 1px, transparent 1px); background-size: 3px 3px; }
			</style>
			<title-bar></title-bar>
			<menu-bar></menu-bar>
			<ribbon-bar></ribbon-bar>
			<tab-strip></tab-strip>
			<main>
				<div class="left">
					<dock-panel heading="Project Manager"><project-tree></project-tree></dock-panel>
					<div class="bar"></div>
					<dock-panel heading="Properties"><property-grid></property-grid></dock-panel>
				</div>
				<div class="bar"></div>
				<div class="right">
					<div class="editor">
						<model-tree></model-tree>
						<div></div>
						<model-view></model-view>
					</div>
					<div class="bar"></div>
					<div class="output">
						<dock-panel heading="Message Manager"><message-list></message-list></dock-panel>
						<div class="bar"></div>
						<dock-panel heading="Progress"></dock-panel>
					</div>
				</div>
			</main>
			<status-bar></status-bar>
			<caption-bar>
				<span slot="course">Advanced Course on Design of Surface PMSMs</span>
				<span slot="channel">ComProgExpert - YouTube</span>
			</caption-bar>
			<video-title>用于计算气隙磁场的等效模型</video-title>
		`
	}
}
customElements.define('desktop-app', DesktopApp)
</script>
</body>
</html>
